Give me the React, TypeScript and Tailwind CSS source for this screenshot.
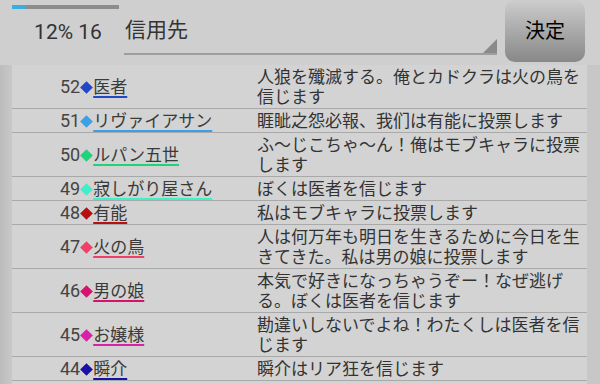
const rows = [
  { no: 52, name: "医者", color: "#2446c8", text: "人狼を殲滅する。俺とカドクラは火の鳥を信じます" },
  { no: 51, name: "リヴァイアサン", color: "#3aa0e8", text: "睚眦之怨必報、我们は有能に投票します" },
  { no: 50, name: "ルパン五世", color: "#1ed47a", text: "ふ～じこちゃ～ん！俺はモブキャラに投票します" },
  { no: 49, name: "寂しがり屋さん", color: "#3ef0c8", text: "ぼくは医者を信じます" },
  { no: 48, name: "有能", color: "#b81010", text: "私はモブキャラに投票します" },
  { no: 47, name: "火の鳥", color: "#f0406a", text: "人は何万年も明日を生きるために今日を生きてきた。私は男の娘に投票します" },
  { no: 46, name: "男の娘", color: "#d81070", text: "本気で好きになっちゃうぞー！なぜ逃げる。ぼくは医者を信じます" },
  { no: 45, name: "お嬢様", color: "#d820a8", text: "勘違いしないでよね！わたくしは医者を信じます" },
  { no: 44, name: "瞬介", color: "#1a10a8", text: "瞬介はリア狂を信じます" },
];

const App = () => {
  return (
    <div className="w-[600px] h-[384px] overflow-hidden bg-[#cfcfcf] text-[#333] font-['Roboto','Noto_Sans_CJK_JP',sans-serif]">
      {/* Header */}
      <div className="flex h-[65px]">
        <div className="w-[124px] pl-[12px] flex flex-col">
          <div className="mt-[5px] w-[107px] h-[4px] bg-[#8c8c8c]">
            <div className="w-[13px] h-full bg-[#3aaee0]" />
          </div>
          <div className="mt-[10px] text-center text-[21px] leading-[26px] text-[#333]">12% 16</div>
        </div>
        <div className="relative w-[373px] h-[55px] border-b-2 border-[#9e9e9e]">
          <div className="pl-[1px] pt-[17px] text-[21px] leading-[26px] text-[#333]">信用先</div>
          <svg className="absolute right-0 bottom-0" width="14" height="14" viewBox="0 0 14 14">
            <polygon points="14,0 14,14 0,14" fill="#8a8a8a" />
          </svg>
        </div>
        <button className="ml-[8px] w-[80px] h-[62px] rounded-[10px] bg-gradient-to-b from-[#cdcdcd] to-[#888] text-[20px] text-black">
          決定
        </button>
      </div>

      {/* List */}
      <div className="flex h-[319px]">
        <div className="w-[12px] bg-gradient-to-r from-[#bcbcbc] to-[#c8c8c8]" />
        <div className="w-[575px] bg-[#d3d3d3]">
          {rows.map((r) => (
            <div key={r.no} className="flex border-b border-[#a9a9a9] pt-[2px] pb-[1px] text-[17px] leading-[20px]">
              <div className="w-[245px] pl-[48px] flex items-center text-[#444]">
                <span className="text-[18px]">{r.no}</span>
                <span className="ml-[2px] mr-[2px] w-[9px] h-[9px] rotate-45" style={{ backgroundColor: r.color }} />
                <span
                  className="text-[#3a3a3a] underline decoration-2 underline-offset-[3px]"
                  style={{ textDecorationColor: r.color }}
                >
                  {r.name}
                </span>
              </div>
              <div className="flex-1 pr-[4px] text-[#333]">{r.text}</div>
            </div>
          ))}
        </div>
        <div className="flex-1 bg-[#c7c7c7]" />
      </div>
    </div>
  );
};

export default App;
